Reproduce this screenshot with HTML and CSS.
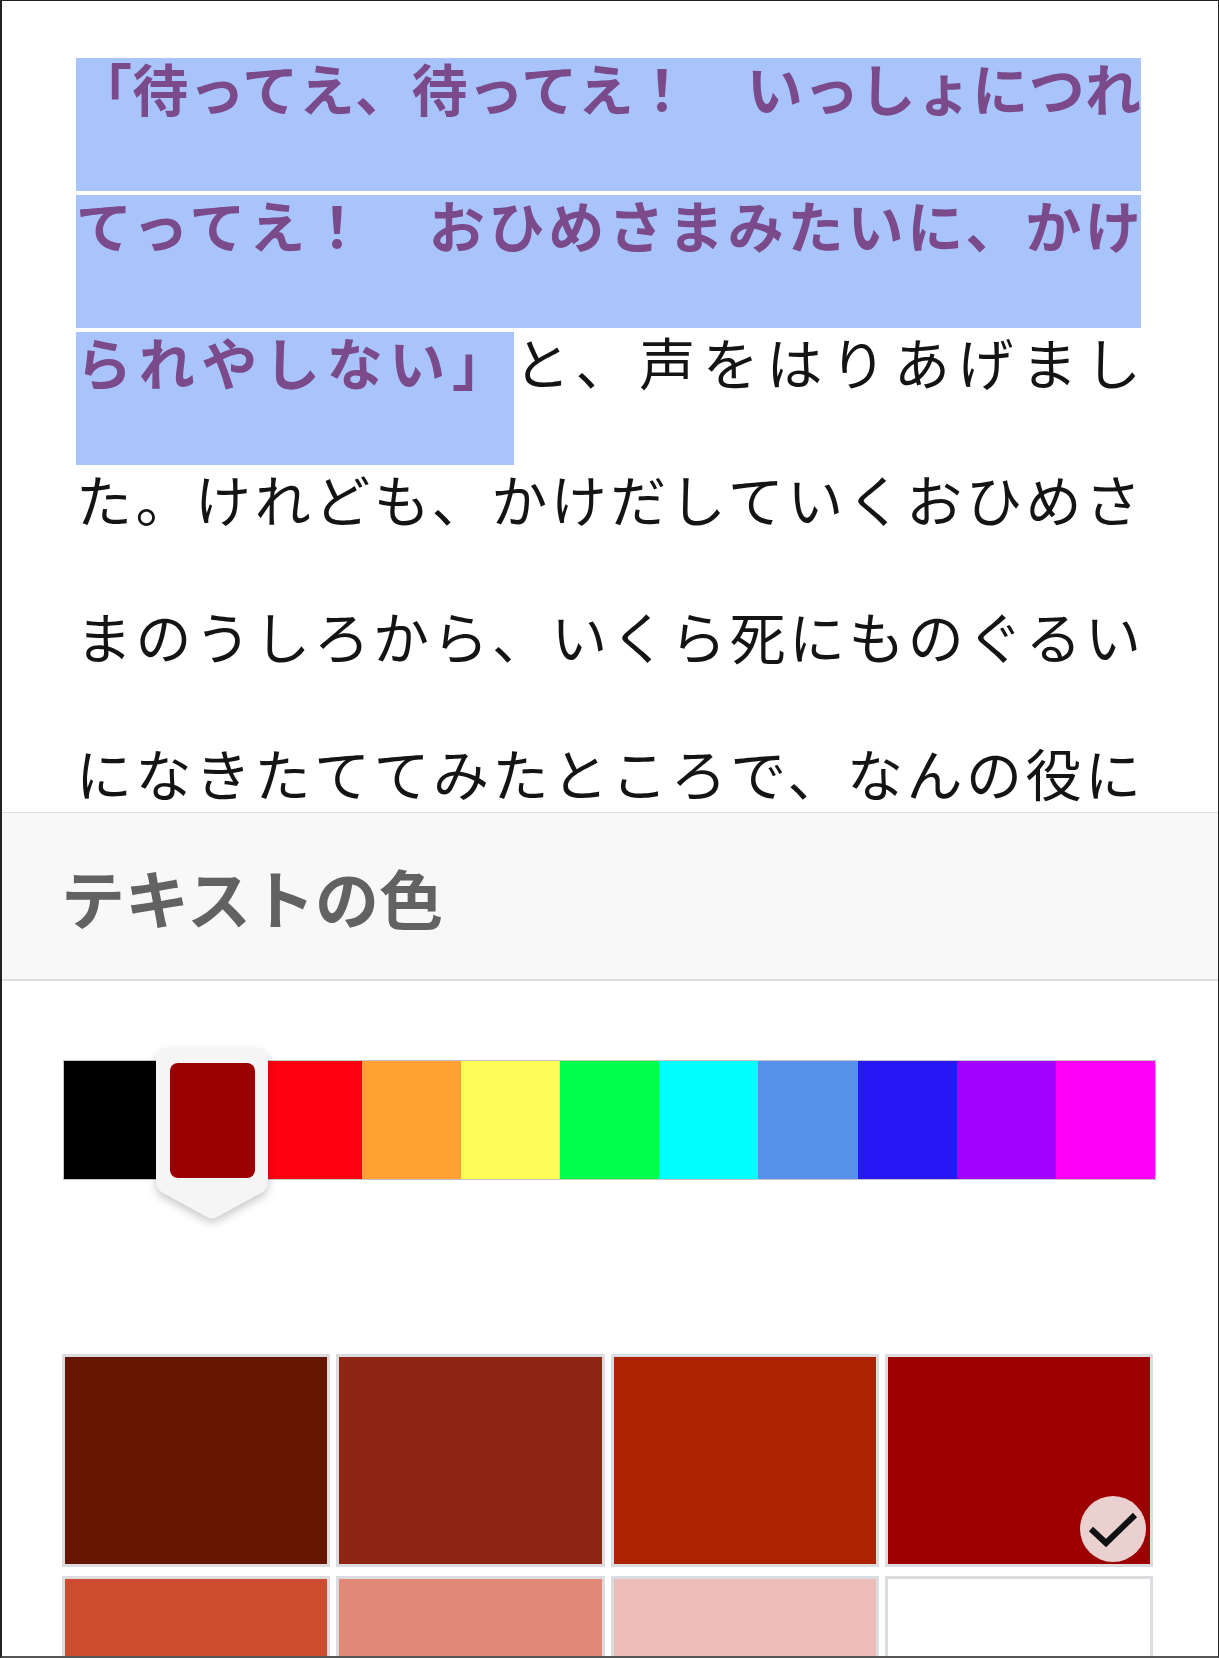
FILE: index.html
```html
<!DOCTYPE html>
<html lang="ja">
<head>
<meta charset="utf-8">
<title>テキストの色</title>
<link rel="stylesheet" href="styles.css">
</head>
<body>
<div class="frame">
  <div class="text">
    <div class="line sel">「待ってえ、待ってえ！　いっしょにつれ</div>
    <div class="line sel">てってえ！　おひめさまみたいに、かけ</div>
    <div class="line split"><span class="hl">られやしない」</span><span class="rest">と、声をはりあげまし</span></div>
    <div class="line">た。けれども、かけだしていくおひめさ</div>
    <div class="line">まのうしろから、いくら死にものぐるい</div>
    <div class="line">になきたててみたところで、なんの役に</div>
  </div>
  <div class="panel">
    <div class="panel-head">
      <h1 class="title">テキストの色</h1>
    </div>
    <div class="picker">
      <div class="strip">
        <div class="cell c1"></div>
        <div class="cell c2"></div>
        <div class="cell c3"></div>
        <div class="cell c4"></div>
        <div class="cell c5"></div>
        <div class="cell c6"></div>
        <div class="cell c7"></div>
        <div class="cell c8"></div>
        <div class="cell c9"></div>
        <div class="cell c10"></div>
        <div class="cell c11"></div>
        <svg class="marker" width="112" height="174" viewBox="0 0 112 174">
          <path d="M14 0 H98 Q112 0 112 14 V134 Q112 141 105 145 L61 169 Q56 172 51 169 L7 145 Q0 141 0 134 V14 Q0 0 14 0 Z" fill="#f5f5f5"/>
          <rect x="14" y="15" width="85" height="115" rx="8" ry="8" fill="#9b0000"/>
        </svg>
      </div>
      <div class="swatches">
        <div class="sw s1"></div>
        <div class="sw s2"></div>
        <div class="sw s3"></div>
        <div class="sw s4">
          <span class="check">
            <svg width="66" height="66" viewBox="0 0 66 66">
              <polyline points="11,33 26,47 55,19" fill="none" stroke="#111" stroke-width="6"/>
            </svg>
          </span>
        </div>
        <div class="sw s5"></div>
        <div class="sw s6"></div>
        <div class="sw s7"></div>
        <div class="sw s8"></div>
      </div>
    </div>
  </div>
</div>
</body>
</html>
```

FILE: styles.css
```css
html, body {
  margin: 0;
  padding: 0;
  background: #ffffff;
}

.frame {
  width: 1219px;
  height: 1658px;
  box-sizing: border-box;
  border-top: 1px solid #222;
  border-left: 2px solid #222;
  border-right: 1px solid #222;
  border-bottom: 2px solid #555;
  overflow: hidden;
  background: #ffffff;
  font-family: "Noto Sans CJK JP", "Noto Sans", sans-serif;
}

.text {
  height: 811px;
  box-sizing: border-box;
  padding: 57px 0 0 74px;
  overflow: hidden;
}

.line {
  width: 1065px;
  height: 133px;
  margin-bottom: 4px;
  box-sizing: border-box;
  padding-top: 1px;
  font-size: 56px;
  line-height: 56px;
  font-weight: 400;
  color: #141414;
  text-align: justify;
  text-align-last: justify;
  text-justify: inter-character;
}

.sel {
  background: #a9c4fb;
  color: #7a4a8b;
  font-weight: 700;
}

.split {
  display: flex;
  padding-top: 0;
}

.hl {
  display: block;
  width: 438px;
  height: 133px;
  box-sizing: border-box;
  padding: 1px 6px 0 0;
  background: #a9c4fb;
  color: #7a4a8b;
  font-weight: 700;
  text-align: justify;
  text-align-last: justify;
  text-justify: inter-character;
}

.rest {
  display: block;
  flex: 1;
  padding-top: 1px;
  text-align: justify;
  text-align-last: justify;
  text-justify: inter-character;
}

.panel {
  border-top: 1px solid #dcdcdc;
}

.panel-head {
  height: 166px;
  background: #f8f8f8;
  border-bottom: 2px solid #dedede;
  display: flex;
  align-items: center;
  padding-left: 59px;
}

.title {
  margin: 0;
  font-size: 64px;
  line-height: 1;
  font-weight: 700;
  color: #626262;
}

.picker {
  padding-top: 80px;
}

.strip {
  position: relative;
  display: flex;
  width: 1091px;
  height: 118px;
  margin-left: 62px;
  box-shadow: 0 0 0 1px #c4c4c4;
}

.cell { flex: 1; }
.c1 { background: #000000; }
.c2 { background: #9b0000; }
.c3 { background: #ff0011; }
.c4 { background: #ffa133; }
.c5 { background: #fefd57; }
.c6 { background: #00fe4f; }
.c7 { background: #00ffff; }
.c8 { background: #5790e8; }
.c9 { background: #2619f6; }
.c10 { background: #a100fd; }
.c11 { background: #ff00f6; }

.marker {
  position: absolute;
  left: 92px;
  top: -13px;
  filter: drop-shadow(0 4px 5px rgba(0, 0, 0, 0.22));
}

.swatches {
  display: grid;
  grid-template-columns: repeat(4, 1fr);
  column-gap: 6px;
  row-gap: 9px;
  width: 1091px;
  margin: 175px 0 0 60px;
}

.sw {
  position: relative;
  height: 213px;
  box-sizing: border-box;
  border: 3px solid #dadcdf;
}

.s1 { background: #661500; }
.s2 { background: #8f2613; }
.s3 { background: #ad2300; }
.s4 { background: #9d0000; }
.s5 { background: #cd4b2e; }
.s6 { background: #e28878; }
.s7 { background: #ecbcb8; }
.s8 { background: #ffffff; }

.check {
  position: absolute;
  right: 4px;
  bottom: 2px;
  width: 66px;
  height: 66px;
  border-radius: 50%;
  background: #ebd0d0;
  display: flex;
}
```
